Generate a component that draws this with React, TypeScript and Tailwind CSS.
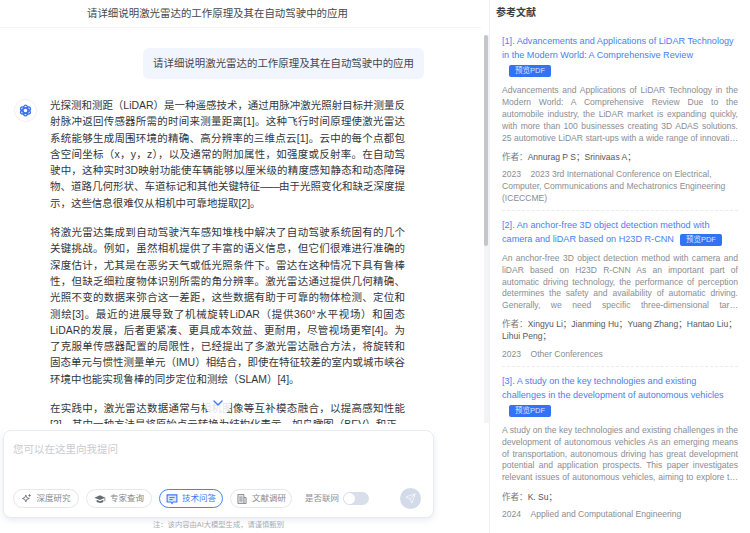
import type { ReactNode } from 'react';
import { ChevronDown, Send } from 'lucide-react';

const QUESTION = '请详细说明激光雷达的工作原理及其在自动驾驶中的应用';

const ANSWER: ReactNode[] = [
  <>
    光探测和测距（LiDAR）是一种遥感技术，通过用脉冲激光照射目标并测量反射脉冲返回传感器所需的时间来测量距离[1]。这种飞行时间原理使激光雷达系统能够生成周围环境的精确、高分辨率的三维点云[1]。云中的每个点都包含空间坐标（x，y，z），以及通常的附加属性，如强度或反射率。在自动驾驶中，这种实时3D映射功能使车辆能够以厘米级的精度感知静态和动态障碍物、道路几何形状、车道标记和其他关键特征
    {/* the dash is tighter in the original, which keeps 提 on this line */}
    <span className="tracking-[-1px]">——</span>
    由于光照变化和缺乏深度提示，这些信息很难仅从相机中可靠地提取[2]。
  </>,
  '将激光雷达集成到自动驾驶汽车感知堆栈中解决了自动驾驶系统固有的几个关键挑战。例如，虽然相机提供了丰富的语义信息，但它们很难进行准确的深度估计，尤其是在恶劣天气或低光照条件下。雷达在这种情况下具有鲁棒性，但缺乏细粒度物体识别所需的角分辨率。激光雷达通过提供几何精确、光照不变的数据来弥合这一差距，这些数据有助于可靠的物体检测、定位和测绘[3]。最近的进展导致了机械旋转LiDAR（提供360°水平视场）和固态LiDAR的发展，后者更紧凑、更具成本效益、更耐用，尽管视场更窄[4]。为了克服单传感器配置的局限性，已经提出了多激光雷达融合方法，将旋转和固态单元与惯性测量单元（IMU）相结合，即使在特征较差的室内或城市峡谷环境中也能实现鲁棒的同步定位和测绘（SLAM）[4]。',
  // Cut where the composer covers the rest of the answer.
  '在实践中，激光雷达数据通常与相机图像等互补模态融合，以提高感知性能[2]。其中一种方法是将原始点云转换为结构化表示，如鸟瞰图（BEV）和正',
];

type Ref = {
  title: string;
  /** Button sits on its own line when the title fills the width. */
  pdfInline: boolean;
  abstract: string;
  authors: string;
  meta: string;
};

const REFS: Ref[] = [
  {
    title: '[1]. Advancements and Applications of LiDAR Technology in the Modern World: A Comprehensive Review',
    pdfInline: false,
    abstract:
      'Advancements and Applications of LiDAR Technology in the Modern World: A Comprehensive Review Due to the automobile industry, the LiDAR market is expanding quickly, with more than 100 businesses creating 3D ADAS solutions. 25 automotive LiDAR start-ups with a wide range of innovati…',
    authors: 'Annurag P S；Srinivaas A；',
    meta: '2023\u00a0\u00a0\u00a0\u00a02023 3rd International Conference on Electrical, Computer, Communications and Mechatronics Engineering (ICECCME)',
  },
  {
    title: '[2]. An anchor-free 3D object detection method with camera and liDAR based on H23D R-CNN',
    pdfInline: true,
    abstract:
      'An anchor-free 3D object detection method with camera and liDAR based on H23D R-CNN As an important part of automatic driving technology, the performance of perception determines the safety and availability of automatic driving. Generally, we need specific three-dimensional tar…',
    authors: 'Xingyu Li；Jianming Hu；Yuang Zhang；Hantao Liu；Lihui Peng；',
    meta: '2023\u00a0\u00a0\u00a0\u00a0Other Conferences',
  },
  {
    title: '[3]. A study on the key technologies and existing challenges in the development of autonomous vehicles',
    pdfInline: false,
    abstract:
      'A study on the key technologies and existing challenges in the development of autonomous vehicles As an emerging means of transportation, autonomous driving has great development potential and application prospects. This paper investigates relevant issues of autonomous vehicles, aiming to explore t…',
    authors: 'K. Su；',
    meta: '2024\u00a0\u00a0\u00a0\u00a0Applied and Computational Engineering',
  },
];

function AtomIcon() {
  return (
    <svg viewBox="0 0 24 24" className="h-[13px] w-[13px]" fill="none" stroke="#3b6ff5" strokeWidth="2.6">
      <ellipse cx="12" cy="12" rx="4.5" ry="10" />
      <ellipse cx="12" cy="12" rx="4.5" ry="10" transform="rotate(60 12 12)" />
      <ellipse cx="12" cy="12" rx="4.5" ry="10" transform="rotate(120 12 12)" />
    </svg>
  );
}

function SparkIcon() {
  return (
    <svg viewBox="0 0 16 16" className="h-[11px] w-[11px]" fill="#666b75">
      <path d="M7 3 8.4 6.6 12 8 8.4 9.4 7 13 5.6 9.4 2 8 5.6 6.6Z" fill="none" stroke="#666b75" strokeWidth="1.3" />
      <path d="M12.5 1 13.2 2.8 15 3.5 13.2 4.2 12.5 6 11.8 4.2 10 3.5 11.8 2.8Z" />
    </svg>
  );
}

function CapIcon() {
  return (
    <svg viewBox="0 0 16 16" className="h-3 w-3" fill="#666b75">
      <path d="M8 3 .5 6.2 8 9.4l6-2.6V11h1V6.2Z" />
      <path d="M3.5 9v2.6c1 1 2.800 1.600 4.500 1.600s3.500-.6 4.500-1.600V9L8 11Z" />
    </svg>
  );
}

function ScreenIcon() {
  return (
    <svg viewBox="0 0 16 16" className="h-3 w-3">
      <path d="M1.500 2.500h13v9.500H9.500L8 14l-1.500-2H1.500Z" fill="#dbe7ff" stroke="#3b78f7" strokeWidth="1.500" />
      <path d="M4.500 6h7M4.500 8.800h4.500" stroke="#3b78f7" strokeWidth="1.300" />
    </svg>
  );
}

function DocIcon() {
  return (
    <svg viewBox="0 0 16 16" className="h-3 w-3" fill="#e2e3e6" stroke="#7c8088" strokeWidth="1.100">
      <path d="M10.500 6h3v8h-3" />
      <path d="M2.500 2h8v12h-8Z" />
      <path d="M4.500 5.500h4M4.500 8h4M4.500 10.500h4" />
    </svg>
  );
}

function Chip({ icon, label, active, width }: { icon: ReactNode; label: string; active?: boolean; width: string }) {
  return (
    <span
      className={`flex h-[19px] items-center justify-center gap-1 rounded-full bg-white text-[8.500px] ${width} ${
        active
          ? 'border-[1.5px] border-[#4a80f8] text-[#3b78f7]'
          : 'border-[1.5px] border-[#e6e7ea] text-[#85888e]'
      }`}
    >
      {icon}
      {label}
    </span>
  );
}

function PdfButton({ inline }: { inline: boolean }) {
  return (
    <span
      className={`h-3 w-[42px] items-center justify-center rounded-[2px] bg-[#3273f6] text-[7.500px] leading-3 text-[#dbe6ff] ${
        inline ? 'ml-1.5 inline-flex' : 'mb-[8.500px] ml-[7px] mt-[2px] flex'
      }`}
    >
      预览PDF
    </span>
  );
}

function RefItem({ item, last }: { item: Ref; last: boolean }) {
  return (
    <li className={`pt-[7px] ${last ? '' : 'border-b border-dashed border-[#e9ebef] pb-[5px]'}`}>
      <div className="text-[9.150px] leading-[14.400px] text-[#4a7ef5]">
        {item.title}
        {item.pdfInline && <PdfButton inline />}
      </div>
      {!item.pdfInline && <PdfButton inline={false} />}
      <p
        className={`text-justify text-[8.550px] leading-[11.800px] text-[#8a8d93] [text-align-last:justify] ${
          item.pdfInline ? 'mt-[6.500px]' : ''
        }`}
      >
        {item.abstract}
      </p>
      <p className="mt-[6.500px] text-[8.550px] leading-[12px] text-[#55585e]">
        <span className="text-[#777a80]">作者：</span>
        {item.authors}
      </p>
      <p className="mt-[6.500px] text-[8.550px] leading-[11.800px] text-[#8a8d93]">{item.meta}</p>
    </li>
  );
}

function Composer() {
  return (
    <div className="absolute bottom-[15px] left-[3px] flex h-[88px] w-[431px] flex-col justify-between rounded-[8px] border border-[#e7ebf4] bg-white px-[9px] pb-[8px] pt-[10px] shadow-[0_-6px_0_0_#fff,0_2px_6px_rgba(120,140,190,0.18)]">
      <div className="text-[10.500px] leading-[16px] text-[#c8cbd1]">您可以在这里向我提问</div>
      <div className="flex items-center">
        <div className="flex gap-[7px]">
          <Chip icon={<SparkIcon />} label="深度研究" width="w-[66px]" />
          <Chip icon={<CapIcon />} label="专家查询" width="w-[66px]" />
          <Chip icon={<ScreenIcon />} label="技术问答" width="w-[64px]" active />
          <Chip icon={<DocIcon />} label="文献调研" width="w-[62px]" />
        </div>
        <span className="ml-[13px] text-[8.500px] text-[#8d9096]">是否联网</span>
        <span className="ml-[4px] flex h-[13px] w-[26px] items-center rounded-full bg-[#d8deea] px-[1px]">
          <span className="h-[11px] w-[11px] rounded-full bg-white" />
        </span>
        <span className="ml-auto mr-[3px] flex h-[21px] w-[21px] items-center justify-center rounded-full bg-[#d3dbe8]">
          <Send className="h-[11px] w-[11px] text-white" strokeWidth={1.500} />
        </span>
      </div>
    </div>
  );
}

export default function App() {
  return (
    <div className="relative flex h-[533px] w-[750px] overflow-hidden bg-white text-[#33363b] [font-family:'Liberation_Sans','Noto_Sans_CJK_SC',sans-serif]">
      <main className="relative h-full w-[489px] shrink-0 overflow-hidden">
        <header className="flex h-[28px] w-[481px] items-center border-b border-[#f2f5fb] pl-[87px] text-[10.450px] text-[#44474d]">
          {QUESTION}
        </header>

        <div className="ml-[143px] mt-[20px] flex h-[31px] w-[281px] items-center justify-center rounded-[6px] bg-[#f1f5fe] text-[10.450px] text-[#44474d]">
          {QUESTION}
        </div>

        <div className="ml-[14px] mt-[19px] flex gap-[13px]">
          <span className="mt-[1px] flex h-[23px] w-[23px] shrink-0 items-center justify-center rounded-full border border-[#eef0f4] bg-white">
            <AtomIcon />
          </span>
          <div className="w-[355px] space-y-[13px] text-justify text-[10.470px] leading-[16.300px] text-[#33363b]">
            {ANSWER.map((para, i) => (
              <p key={i}>{para}</p>
            ))}
          </div>
        </div>

        <button className="absolute left-[205px] top-[390px] flex h-[26px] w-[26px] items-center justify-center rounded-full bg-white/85 text-[#3b78f7]">
          <ChevronDown className="h-4 w-4" strokeWidth={2} />
        </button>

        <Composer />
        <div className="absolute bottom-[3px] left-[3px] w-[431px] text-center text-[7.300px] leading-[10px] text-[#a9acb2]">
          注：该内容由AI大模型生成，请谨慎甄别
        </div>

        {/* scrollbar */}
        <div className="absolute right-0 top-[35px] h-[388px] w-[5px] bg-[#f3f4f6]">
          <div className="h-[211px] w-[4px] rounded-[2px] bg-[#c4c6ca]" />
        </div>
      </main>

      <aside className="h-full min-w-0 flex-1 border-l border-[#f0f1f4]">
        <h2 className="pl-[6px] pt-[6px] text-[10px] font-bold leading-[14px] text-[#3a3d42]">参考文献</h2>
        <ul className="mt-[7px] px-[12px]">
          {REFS.map((item, i) => (
            <RefItem key={item.title} item={item} last={i === REFS.length - 1} />
          ))}
        </ul>
      </aside>
    </div>
  );
}
